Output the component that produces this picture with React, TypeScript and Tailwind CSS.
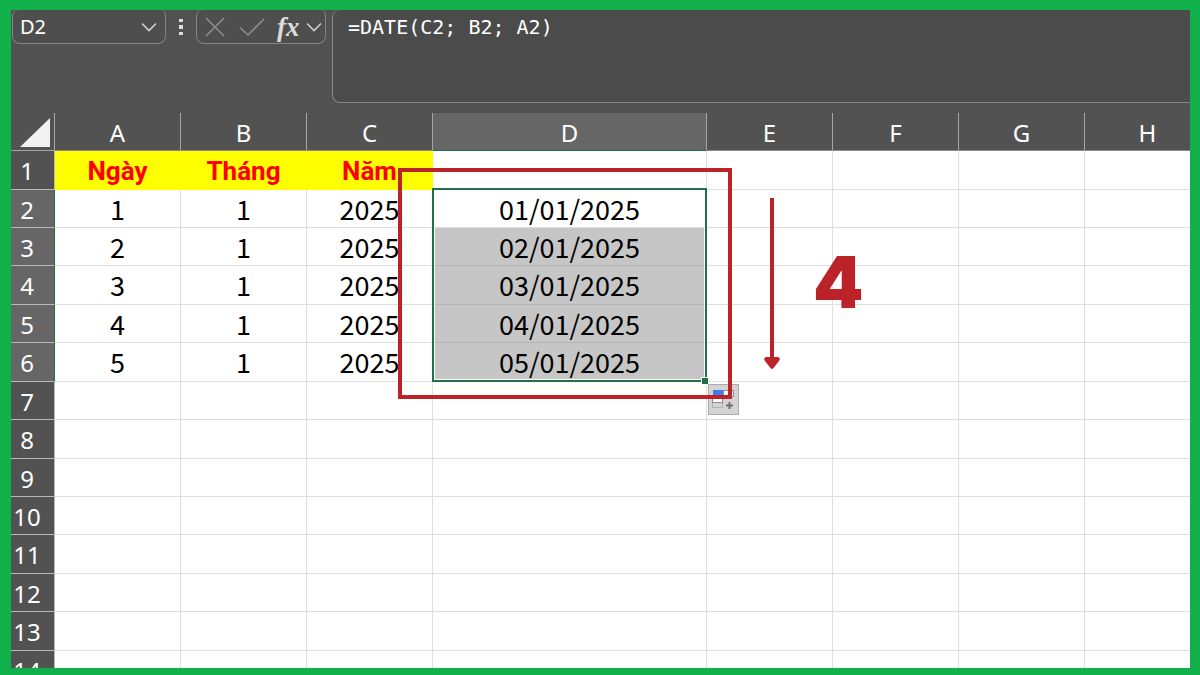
import { clsx } from "clsx";

interface Column {
  id: string;
  width: string;
}

const columns: Column[] = [
  { id: "A", width: "w-[126px]" },
  { id: "B", width: "w-[126px]" },
  { id: "C", width: "w-[126px]" },
  { id: "D", width: "w-[274px]" },
  { id: "E", width: "w-[126px]" },
  { id: "F", width: "w-[126px]" },
  { id: "G", width: "w-[126px]" },
  { id: "H", width: "w-[126px]" },
];

const cells: string[][] = [
  ["Ngày", "Tháng", "Năm"],
  ["1", "1", "2025", "01/01/2025"],
  ["2", "1", "2025", "02/01/2025"],
  ["3", "1", "2025", "03/01/2025"],
  ["4", "1", "2025", "04/01/2025"],
  ["5", "1", "2025", "05/01/2025"],
];

const rowNumbers = Array.from({ length: 14 }, (_, i) => i + 1);
// rows that take the extra pixel of the zoomed sheet
const tallRows = [1, 4, 6, 8, 11, 13];

const isSelectedRow = (row: number) => row >= 2 && row <= 6;

function ChevronDown() {
  return (
    <svg width="16" height="16" viewBox="0 0 16 16" fill="none" stroke="#d0d0d0" strokeWidth="1.6">
      <path d="M1 4.5 L8 11.5 L15 4.5" />
    </svg>
  );
}

function FormulaBar() {
  return (
    <div className="flex h-[103px] shrink-0 items-start bg-[#515151]">
      <div className="ml-px flex h-[34px] w-[154px] shrink-0 items-center rounded-lg rounded-t-md border border-t-0 border-[#858585] bg-[#4e4e4e] pl-[7px] pr-2">
        <input
          aria-label="Name box"
          defaultValue="D2"
          className="min-w-0 flex-1 bg-transparent font-['Noto_Sans',sans-serif] text-[20px] leading-6 text-white outline-none"
        />
        <button aria-label="Open name list">
          <ChevronDown />
        </button>
      </div>

      <svg className="mx-[13px] mt-[9px] shrink-0" width="4" height="17" viewBox="0 0 4 17" fill="#dedede">
        <rect y="0" width="4" height="3" />
        <rect y="6" width="4" height="4" />
        <rect y="13" width="4" height="3" />
      </svg>

      <div className="flex h-[34px] w-[130px] shrink-0 items-center rounded-lg rounded-t-md border border-t-0 border-[#858585] bg-[#4e4e4e] pl-2">
        <button aria-label="Cancel">
          <svg width="20" height="20" viewBox="0 0 20 20" fill="none" stroke="#8c8c8c" strokeWidth="1.6">
            <path d="M1 1 L19 19 M19 1 L1 19" />
          </svg>
        </button>
        <button aria-label="Enter" className="ml-[14px]">
          <svg width="26" height="20" viewBox="0 0 26 20" fill="none" stroke="#8c8c8c" strokeWidth="1.6">
            <path d="M1 10.5 L9 18 L25 2" />
          </svg>
        </button>
        <button
          aria-label="Insert function"
          className="ml-3 w-[22px] whitespace-nowrap font-['Liberation_Serif',serif] text-[27px] font-bold italic leading-7 text-[#dcdcdc]"
        >
          fx
        </button>
        <button aria-label="More functions" className="ml-[7px]">
          <ChevronDown />
        </button>
      </div>

      <textarea
        aria-label="Formula"
        spellCheck={false}
        defaultValue="=DATE(C2; B2; A2)"
        className="ml-[6px] h-[93px] min-w-0 flex-1 resize-none rounded-l-lg border border-r-0 border-t-0 border-[#8a8a8a] bg-[#4b4b4b] pl-[15px] pt-1 font-['DejaVu_Sans_Mono',monospace] text-[20px] leading-[26px] text-white outline-none"
      />
    </div>
  );
}

function Sheet() {
  return (
    <table className="w-[1200px] table-fixed border-separate border-spacing-0 bg-white">
      <colgroup>
        <col className="w-11" />
        {columns.map((c) => (
          <col key={c.id} className={c.width} />
        ))}
      </colgroup>
      <thead className="bg-[#525252] font-['Noto_Sans',sans-serif] text-2xl text-white">
        <tr className="h-[38px]">
          <th className="border-b border-r border-[#a6a6a6] p-0 align-top">
            <button aria-label="Select all" className="ml-[3px] mt-1 block">
              <svg width="38" height="30" viewBox="0 0 38 30" fill="#f2f2f2">
                <path d="M36 1 V30 H6 Z" />
              </svg>
            </button>
          </th>
          {columns.map((c) => (
            <th
              key={c.id}
              scope="col"
              className={clsx(
                "border-b border-r border-r-[#a6a6a6] p-0 pt-0.5 font-normal leading-8",
                c.id === "D" ? "border-b-[#1f7145] bg-[#666666]" : "border-b-[#8a8a8a]",
              )}
            >
              {c.id}
            </th>
          ))}
        </tr>
      </thead>
      <tbody>
        {rowNumbers.map((row) => (
          <tr key={row} className={tallRows.includes(row) ? "h-[39px]" : "h-[38px]"}>
            <th
              scope="row"
              className={clsx(
                "border-b border-r border-b-[#b8b8b8] p-0 pr-[11px] pt-0.5 font-['Noto_Sans',sans-serif] text-2xl font-normal leading-8 text-white",
                isSelectedRow(row) ? "border-r-[#1f7145] bg-[#666666]" : "border-r-[#b8b8b8] bg-[#525252]",
              )}
            >
              {row}
            </th>
            {columns.map((c, i) => {
              const header = row === 1 && i < 3;
              const shaded = c.id === "D" && row >= 3 && row <= 6;
              return (
                <td
                  key={c.id}
                  className={clsx(
                    "border-b border-r p-0 text-center",
                    header && "border-[#ffff00] bg-[#ffff00] pt-0.5 font-['Roboto',sans-serif] text-[26px] font-bold leading-8 text-[#ff0000]",
                    !header && "font-['Noto_Sans_CJK_SC',sans-serif] text-[27px] leading-9 text-black",
                    shaded && "border-[#b4b4b4] bg-[#c6c6c6]",
                    !header && !shaded && "border-[#dfdfdf]",
                  )}
                >
                  {cells[row - 1]?.[i]}
                </td>
              );
            })}
          </tr>
        ))}
      </tbody>
    </table>
  );
}

function Selection() {
  return (
    <>
      <div className="pointer-events-none absolute left-[421px] top-[75px] h-[194px] w-[275px] border-2 border-[#1f7145]">
        <div className="h-full border border-white" />
      </div>
      <div className="absolute left-[690px] top-[264px] size-2 border border-white bg-[#1f7145]" />
      <button
        aria-label="Auto fill options"
        className="absolute left-[697px] top-[271px] flex size-[31px] items-center justify-center border border-[#ababab] bg-[#d4d4d4]"
      >
        <svg width="23" height="23" viewBox="0 0 23 23" fill="none">
          <rect x="11.5" y="2.5" width="10" height="6" fill="#fff" stroke="#8f8f8f" />
          <rect x="0.5" y="8.5" width="10" height="6" fill="#fff" stroke="#8f8f8f" />
          <rect x="0.5" y="14.5" width="10" height="5" stroke="#8f8f8f" strokeDasharray="1 1" />
          <rect x="1" y="2" width="10" height="6" fill="#3f7df0" />
          <path d="M17.5 14 V21 M14 17.5 H21" stroke="#6f6f6f" strokeWidth="2" />
        </svg>
      </button>
    </>
  );
}

function Annotations() {
  return (
    <>
      <div className="pointer-events-none absolute left-[387px] top-[55px] h-[231px] w-[334px] border-4 border-[#bb2328]" />
      <svg className="absolute left-[753px] top-[85px]" width="16" height="172" viewBox="0 0 16 172" fill="#bb2328">
        <rect x="6" y="0" width="4" height="162" />
        <path d="M2 159 H14 Q17 160 15 163 L9.5 170 Q8 172 6.5 170 L1 163 Q-1 160 2 159 Z" />
      </svg>
      <span className="absolute left-[802px] top-[133px] font-['Inter',sans-serif] text-[72px] font-black leading-[72px] text-[#bb2328]">
        4
      </span>
    </>
  );
}

export default function App() {
  return (
    <main className="flex h-screen flex-col overflow-hidden border-b-[7px] border-l-[11px] border-r-[10px] border-t-[10px] border-[#10b04b] bg-white">
      <FormulaBar />
      <div className="relative min-h-0 flex-1 overflow-hidden">
        <Sheet />
        <Selection />
        <Annotations />
      </div>
    </main>
  );
}
